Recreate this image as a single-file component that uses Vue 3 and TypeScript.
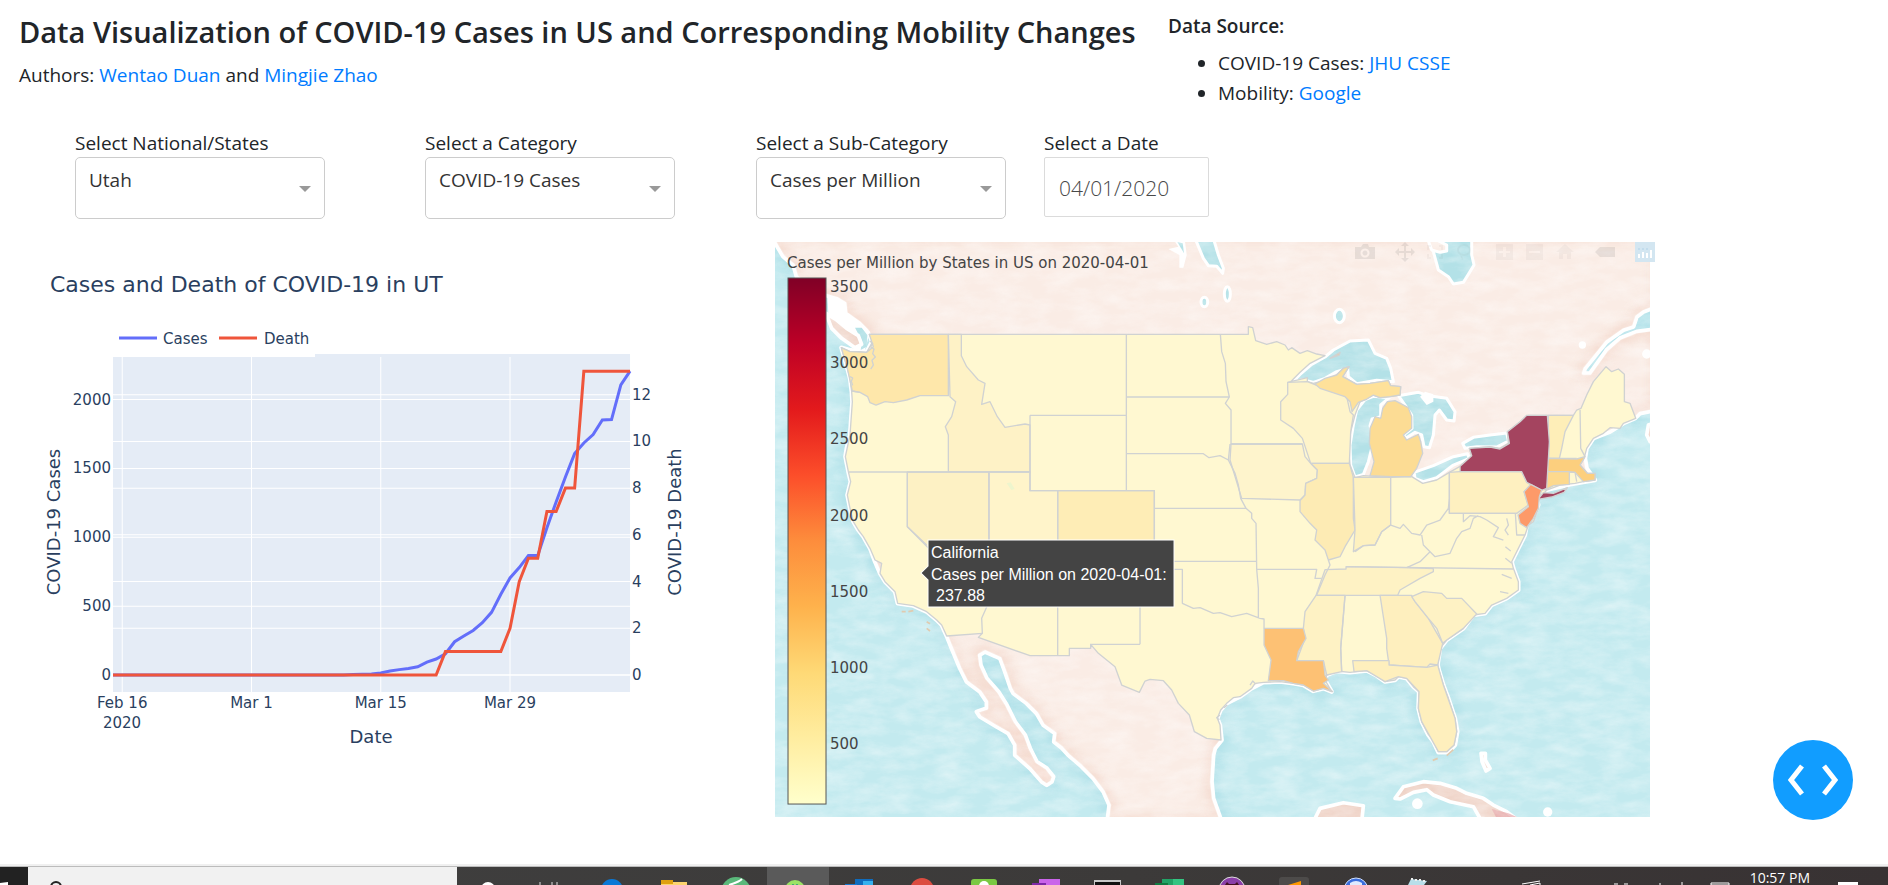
<script setup lang="ts">
interface Choice {
  id: string
  label: string
  value: string
}

const choices: Choice[] = [
  { id: 'region', label: 'Select National/States', value: 'Utah' },
  { id: 'category', label: 'Select a Category', value: 'COVID-19 Cases' },
  { id: 'subcategory', label: 'Select a Sub-Category', value: 'Cases per Million' },
]

/* ---- line chart ---- */
const plot = { left: 113, right: 630, top: 354, bottom: 692, zero: 675 }
const lastDay = 56
const dayX = (d: number) => plot.left + ((plot.right - plot.left) * d) / lastDay
const casesY = (v: number) => plot.zero - v * 0.1377
const deathY = (v: number) => plot.zero - v * 23.36

const cases: number[] = [
  ...Array<number>(25).fill(0), 1, 3, 5, 7, 15, 29, 39, 48, 60, 94, 116, 155, 242, 283, 324, 380,
  455, 586, 705, 780, 867, 867, 1070, 1257, 1438, 1608, 1685, 1746, 1852, 1855, 2107, 2206,
]
const deaths: number[] = [
  ...Array<number>(36).fill(0), 1, 1, 1, 1, 1, 1, 1, 2, 4, 5, 5, 7, 7, 8, 8, 13, 13, 13, 13, 13, 13,
]
const line = (values: number[], y: (v: number) => number) =>
  values.map((v, d) => `${dayX(d).toFixed(1)},${y(v).toFixed(1)}`).join(' ')

const caseTicks = [0, 500, 1000, 1500, 2000]
const deathTicks = [0, 2, 4, 6, 8, 10, 12]
const dateTicks = [
  { day: 1, text: 'Feb 16' },
  { day: 15, text: 'Mar 1' },
  { day: 29, text: 'Mar 15' },
  { day: 43, text: 'Mar 29' },
]

/* ---- map ---- */
const scaleTicks = [3500, 3000, 2500, 2000, 1500, 1000, 500]
const scaleY = (v: number) => 744 - (v - 500) * 0.15233

const land =
  'M15 21L18 28L40 65L70 90L80 125L110 150L165 180L200 190L225 205L228 235L270 265L290 285L298 298L306 320L290 350L268 350L240 345L214 338L232 400L240 430L245 470L247 500L240 600L230 640L226 665L235 710L242 740L232 780L240 820L250 860L265 885L280 905L300 940L315 980L330 1015L345 1040L375 1070L383 1105L430 1112L470 1130L500 1155L515 1170L530 1203L545 1240L570 1300L590 1340L630 1370L650 1400L650 1420L620 1430L630 1445L680 1475L715 1495L735 1530L735 1560L780 1600L815 1640L830 1650L845 1640L850 1625L830 1600L800 1580L780 1540L765 1500L735 1460L710 1410L685 1370L650 1330L632 1290L628 1260L645 1250L690 1270L705 1310L722 1360L730 1375L770 1405L800 1435L820 1470L855 1495L852 1520L875 1538L895 1560L930 1590L970 1630L1000 1670L1018 1710L1012 1760L1355 1760L1330 1690L1325 1640L1330 1560L1335 1540L1355 1515L1350 1470L1342 1450L1352 1425L1370 1405L1410 1385L1445 1360L1480 1342L1530 1340L1570 1345L1600 1350L1630 1368L1660 1360L1685 1370L1665 1335L1670 1320L1700 1308L1740 1312L1790 1307L1820 1322L1845 1340L1875 1335L1885 1325L1910 1330L1930 1355L1947 1370L1945 1420L1955 1460L1975 1500L1990 1520L2005 1552L2035 1552L2055 1530L2062 1490L2055 1450L2035 1390L2020 1350L2008 1310L2003 1290L2010 1240L2030 1215L2080 1180L2110 1140L2145 1135L2165 1110L2210 1090L2245 1065L2245 1040L2230 1000L2225 980L2245 940L2265 900L2270 870L2290 845L2305 810L2300 790L2330 765L2400 748L2475 735L2450 700L2445 670L2450 640L2470 610L2520 590L2560 565L2595 550L2610 535L2660 525L2660 282L2600 290L2550 310L2510 345L2460 415L2440 415L2445 400L2510 320L2560 285L2590 275L2600 245L2620 230L2660 215L2660 0L15 0Z'

const islands = [
  'M168 235L185 280L215 310L255 338L275 328L265 302L230 280L200 255Z',
  'M1875 1690L1900 1655L1960 1640L2010 1645L2060 1660L2090 1675L2140 1690L2170 1710L2210 1730L2250 1760L2130 1750L2110 1715L2040 1700L1990 1680L1970 1664L1930 1672L1890 1692Z',
  'M1630 1760L1650 1720L1720 1703L1780 1712L1775 1760Z',
  'M2660 560L2635 570L2630 600L2640 620L2660 625Z',
  'M2133 1555L2146 1555L2146 1575L2160 1600L2148 1608L2136 1580Z',
]

const lakes = [
  'M1568 440L1590 418L1625 388L1665 366L1690 345L1740 318L1795 315L1815 355L1850 370L1862 400L1870 440L1820 436L1760 446L1735 425L1733 400L1700 410L1665 430L1630 442L1600 434Z',
  'M1858 488L1832 510L1832 545L1806 552L1800 572L1810 620L1795 680L1780 718L1755 726L1742 690L1740 630L1750 570L1760 525L1785 494L1810 484Z',
  'M1885 482L1945 472L1975 482L2030 490L2055 530L2052 558L2030 555L2008 525L1995 540L1990 600L1978 638L1962 635L1955 600L1935 592L1903 612L1903 598L1926 580L1925 540L1905 510Z',
  'M1932 712L1990 692L2050 665L2092 656L2098 670L2050 690L2000 728L1960 740L1935 730Z',
  'M2078 625L2110 607L2160 600L2210 594L2215 618L2180 636L2120 635L2085 640Z',
  'M1980 0L1990 50L2005 105L2035 125L2050 147L2080 142L2100 110L2112 90L2105 60L2105 0Z',
  'M1275 10L1300 70L1315 92L1340 94L1358 115L1360 100L1345 60L1330 10Z',
]

const usa =
  'M298 298L1435 298L1435 275L1448 278L1457 317L1490 328L1520 320L1545 330L1555 345L1565 338L1590 355L1612 347L1640 357L1665 362L1620 385L1590 412L1562 440L1612 428L1612 440L1630 445L1690 430L1720 400L1737 395L1718 425L1760 448L1800 445L1855 437L1862 452L1892 455L1890 480L1860 485L1830 488L1810 480L1790 492L1770 500L1755 540L1742 590L1735 640L1740 690L1755 728L1780 722L1862 727L1925 725L1958 745L2000 735L2038 712L2070 694L2105 662L2098 640L2160 635L2190 640L2215 625L2212 590L2250 560L2275 541L2410 541L2420 525L2433 520L2450 480L2470 440L2508 395L2525 410L2545 402L2563 418L2563 500L2580 505L2597 550L2560 565L2550 580L2520 578L2500 595L2470 610L2450 640L2442 670L2430 690L2452 715L2475 715L2475 735L2440 740L2415 745L2370 750L2330 765L2305 795L2305 820L2290 860L2275 870L2265 900L2245 940L2225 980L2230 1000L2245 1040L2245 1065L2210 1090L2165 1110L2145 1135L2110 1140L2080 1180L2030 1215L2010 1240L2003 1290L2008 1310L2020 1350L2035 1390L2055 1450L2060 1490L2052 1530L2030 1550L2005 1550L1990 1515L1975 1498L1955 1460L1945 1420L1947 1370L1930 1355L1910 1330L1885 1325L1875 1335L1845 1340L1820 1322L1790 1307L1740 1312L1700 1308L1670 1320L1665 1335L1685 1370L1660 1360L1630 1368L1600 1350L1570 1345L1530 1340L1480 1342L1455 1345L1445 1360L1410 1385L1390 1388L1370 1405L1352 1425L1342 1450L1350 1470L1353 1515L1310 1510L1273 1490L1258 1440L1225 1405L1205 1365L1180 1337L1140 1333L1125 1338L1108 1372L1055 1350L1035 1295L985 1255L962 1228L962 1240L898 1240L898 1262L780 1262L625 1207L637 1195L530 1203L515 1170L500 1155L470 1130L430 1112L383 1105L375 1070L345 1040L330 1015L335 985L315 975L300 940L280 905L265 885L250 860L240 820L232 780L242 740L235 710L226 665L240 600L247 500L245 470L240 430L232 400L214 338L240 350L268 350L290 352L308 320Z'

interface Shade {
  fill: string
  d: string
}

const shaded: Shade[] = [
  { fill: '#fee7aa', d: 'M298 298L535 298L535 482L450 482L410 495L370 503L345 500L318 510L300 503L293 485L270 472L247 468L232 400L214 338L240 350L290 352L310 335Z' },
  { fill: '#fef2c6', d: 'M535 298L574 298L574 362L590 395L625 435L645 445L635 508L660 500L682 545L705 577L765 567L780 570L780 711L535 711L535 600L526 575L545 545L557 500L540 485Z' },
  { fill: '#fdf1c4', d: 'M412 711L657 711L657 1100L635 1100L412 875Z' },
  { fill: '#fff4ca', d: 'M657 711L780 711L780 767L863 767L863 979L657 979Z' },
  { fill: '#feedb6', d: 'M863 767L1153 767L1153 979L863 979Z' },
  { fill: '#fef4cc', d: 'M1383 627L1597 627L1605 665L1622 685L1642 705L1640 730L1607 745L1605 780L1590 795L1415 790L1380 675Z' },
  { fill: '#fef4ca', d: 'M1553 442L1612 440L1650 455L1730 485L1740 530L1750 540L1742 590L1738 685L1622 685L1597 610L1570 580L1532 555L1532 500L1553 478Z' },
  { fill: '#fdebb4', d: 'M1622 685L1738 685L1750 727L1750 850L1755 885L1725 935L1710 965L1675 975L1665 945L1635 915L1640 885L1620 865L1590 830L1590 797L1605 780L1607 745L1640 730L1642 705Z' },
  { fill: '#fef1c0', d: 'M1750 727L1862 727L1862 870L1835 890L1815 930L1780 932L1750 950L1755 885Z' },
  { fill: '#fef2c4', d: 'M1665 1004L1728 1002L1728 995L1910 998L1990 1001L1990 1010L1950 1030L1890 1065L1883 1081L1638 1081Z' },
  { fill: '#fef2c4', d: 'M1638 1081L1725 1081L1712 1240L1715 1310L1670 1320L1660 1277L1580 1277L1605 1210L1600 1180L1605 1130Z' },
  { fill: '#feefbe', d: 'M1830 1081L1925 1081L1935 1100L1975 1150L2018 1225L2003 1290L1980 1287L1970 1297L1857 1290L1850 1240L1850 1210Z' },
  { fill: '#feefbd', d: 'M1748 1277L1857 1277L1857 1290L1970 1297L2003 1290L2020 1350L2055 1450L2060 1490L2052 1530L2030 1550L2005 1550L1955 1460L1945 1420L1947 1370L1910 1330L1885 1325L1845 1340L1790 1307L1752 1310Z' },
  { fill: '#fef2c4', d: 'M1925 1085L1960 1070L2015 1075L2030 1090L2075 1090L2120 1137L2080 1180L2030 1215L2018 1225L2000 1180L1975 1150L1935 1100Z' },
  { fill: '#fef0c0', d: 'M2038 712L2070 710L2255 710L2270 740L2282 750L2262 770L2275 810L2240 835L2038 835Z' },
  { fill: '#fee19a', d: 'M1635 447L1665 430L1700 420L1720 400L1737 395L1718 425L1760 448L1800 445L1855 437L1862 452L1892 455L1890 480L1860 485L1830 488L1810 480L1790 492L1765 502L1746 530L1740 500L1725 485L1650 460Z' },
  { fill: '#fcdc94', d: 'M1852 500L1875 497L1915 518L1925 545L1925 580L1900 600L1910 615L1945 598L1952 620L1958 655L1940 700L1922 725L1862 725L1800 722L1812 680L1798 625L1800 580L1815 545L1832 550L1838 520Z' },
  { fill: '#feeeb8', d: 'M2335 541L2410 541L2385 590L2375 640L2368 670L2335 670Z' },
  { fill: '#fccf7e', d: 'M2332 670L2420 672L2445 665L2430 690L2452 715L2475 715L2475 735L2440 740L2415 712L2330 710Z' },
  { fill: '#fdd98e', d: 'M2330 710L2398 710L2398 748L2350 752L2325 765Z' },
  { fill: '#fdc174', d: 'M1482 1180L1600 1180L1608 1210L1585 1250L1580 1277L1660 1277L1665 1320L1675 1335L1660 1345L1688 1370L1660 1360L1630 1368L1600 1350L1570 1345L1540 1337L1495 1337L1503 1275L1482 1230Z' },
  { fill: '#a4445f', d: 'M2070 710L2070 694L2105 662L2098 640L2160 636L2190 642L2218 625L2212 590L2250 560L2270 541L2332 541L2338 620L2330 760L2315 766L2270 742L2255 710Z' },
  { fill: '#a4445f', d: 'M2304 793L2320 773L2350 775L2392 758L2382 772L2345 786Z' },
  { fill: '#fd9a69', d: 'M2282 748L2315 765L2308 785L2305 820L2290 850L2270 878L2250 865L2244 840L2275 815L2262 770Z' },
]

const borders =
  'M412 711V875L470 930M657 711V1100L635 1150L637 1195M235 711H780M245 468L270 472M780 541H1069M780 541V767H1153V979H1458M1069 298V767M863 767V1262M1110 1228V1003H1237V1105L1270 1120L1290 1118L1330 1135L1350 1133L1385 1145L1430 1135L1470 1150L1482 1152V1180M962 1228H1110M1069 486H1378M1069 656H1300L1317 668L1350 662L1375 675M1153 820H1428M1351 298L1355 350L1366 385L1368 440L1378 486L1366 505L1383 525V627H1597M1553 442L1562 440M1380 627L1375 675L1395 715L1405 750L1412 790L1428 820L1445 835L1445 850L1458 865L1460 1003H1640L1635 1030H1655M1675 975L1680 990L1665 1020L1640 1080M1460 1003L1465 1060V1150M1153 979V820M1728 995L2230 1002M2038 712V835H2240M1755 950L1780 932L1815 930L1835 890L1862 870L1890 880L1900 868L1925 895L1950 900L1970 870L2010 855L2035 820L2038 790M1910 998L1950 980L1980 950M1955 900L1960 930L1995 965L2040 955L2060 910L2075 890L2100 880L2110 850L2125 842M2080 835V860L2100 842L2130 845L2150 855L2185 878L2170 905L2200 915M2236 835L2240 900H2265M2430 525L2432 640L2445 665M2335 670H2420M2398 710L2415 712L2420 740M1725 1081L1712 1240L1715 1310M2206 935L2222 948M2206 970L2225 985M2195 1018L2225 1030M2190 1070L2215 1075M2210 850L2215 870L2205 885L2215 900'
</script>

<template>
  <div class="page">
    <header class="head">
      <div class="intro">
        <h1>Data Visualization of COVID-19 Cases in US and Corresponding Mobility Changes</h1>
        <p>Authors: <a href="#">Wentao Duan</a> and <a href="#">Mingjie Zhao</a></p>
      </div>
      <section class="sources">
        <h2>Data Source:</h2>
        <ul>
          <li>COVID-19 Cases: <a href="#">JHU CSSE</a></li>
          <li>Mobility: <a href="#">Google</a></li>
        </ul>
      </section>
    </header>

    <form class="controls" @submit.prevent>
      <div v-for="c in choices" :key="c.id" class="field">
        <label :for="c.id">{{ c.label }}</label>
        <div class="picker">
          <select :id="c.id">
            <option>{{ c.value }}</option>
          </select>
        </div>
      </div>
      <div class="field">
        <label for="date">Select a Date</label>
        <input id="date" class="date" type="text" value="04/01/2020" />
      </div>
    </form>

    <main class="charts">
      <svg class="chart" viewBox="30 242 745 575" role="img" aria-label="Cases and Death of COVID-19 in UT">
        <text class="title" x="50" y="292">Cases and Death of COVID-19 in UT</text>
        <rect class="area" :x="plot.left" :y="plot.top" :width="plot.right - plot.left" :height="plot.bottom - plot.top" />
        <rect x="113" y="353" width="202" height="4" fill="#fff" />
        <g class="grid">
          <line v-for="t in dateTicks" :key="t.text" :x1="dayX(t.day)" :x2="dayX(t.day)" y1="357" :y2="plot.bottom" />
          <line v-for="v in caseTicks" :key="`c${v}`" :x1="plot.left" :x2="plot.right" :y1="casesY(v)" :y2="casesY(v)" />
          <line v-for="v in deathTicks" :key="`d${v}`" :x1="plot.left" :x2="plot.right" :y1="deathY(v)" :y2="deathY(v)" />
        </g>
        <polyline class="series blue" :points="line(cases, casesY)" />
        <polyline class="series red" :points="line(deaths, deathY)" />
        <line class="series blue" x1="119" x2="157" y1="338" y2="338" />
        <line class="series red" x1="219" x2="257" y1="338" y2="338" />
        <text x="163" y="344">Cases</text>
        <text x="264" y="344">Death</text>
        <text v-for="v in caseTicks" :key="v" x="111" :y="casesY(v) + 5" text-anchor="end">{{ v }}</text>
        <text v-for="v in deathTicks" :key="v" x="632" :y="deathY(v) + 5">{{ v }}</text>
        <text v-for="t in dateTicks" :key="t.text" :x="dayX(t.day)" y="708" text-anchor="middle">{{ t.text }}</text>
        <text x="122" y="728" text-anchor="middle">2020</text>
        <text class="axis" x="371" y="743" text-anchor="middle">Date</text>
        <text class="axis" transform="translate(60 522) rotate(-90)" text-anchor="middle">COVID-19 Cases</text>
        <text class="axis" transform="translate(681 522) rotate(-90)" text-anchor="middle">COVID-19 Death</text>
      </svg>

      <div class="map">
        <svg viewBox="775 242 875 575" role="img" aria-label="Cases per Million by States in US">
          <defs>
            <clipPath id="frame"><rect x="15" y="21" width="2625" height="1725" /></clipPath>
            <clipPath id="landclip"><path :d="land" /></clipPath>
            <filter id="soft" x="-10%" y="-10%" width="120%" height="120%"><feGaussianBlur stdDeviation="14" /></filter>
            <filter id="paper" x="0" y="0" width="100%" height="100%">
              <feTurbulence type="fractalNoise" baseFrequency="0.012 0.03" numOctaves="5" seed="4" />
              <feColorMatrix values="0 0 0 0 1  0 0 0 0 1  0 0 0 0 1  1.4 0 0 0 -0.45" />
            </filter>
            <linearGradient id="ramp" x1="0" y1="1" x2="0" y2="0">
              <stop offset="0" stop-color="#ffffcc" />
              <stop offset=".125" stop-color="#ffeda0" />
              <stop offset=".25" stop-color="#fed976" />
              <stop offset=".375" stop-color="#feb24c" />
              <stop offset=".5" stop-color="#fd8d3c" />
              <stop offset=".625" stop-color="#fc4e2a" />
              <stop offset=".75" stop-color="#e31a1c" />
              <stop offset=".875" stop-color="#bd0026" />
              <stop offset="1" stop-color="#800026" />
            </linearGradient>
          </defs>

          <g transform="translate(770 235) scale(.33333)">
            <g clip-path="url(#frame)" stroke-linejoin="round">
              <rect x="15" y="21" width="2625" height="1725" fill="#c3eaef" />
              <path :d="land" fill="none" stroke="#a9dde6" stroke-width="46" filter="url(#soft)" opacity=".6" />
              <path :d="land" fill="#faece5" stroke="#fff" stroke-width="13" />
              <g clip-path="url(#landclip)">
                <path :d="land" fill="none" stroke="#f3d6c9" stroke-width="40" filter="url(#soft)" opacity=".7" />
              </g>
              <path :d="land" fill="none" stroke="#fff" stroke-width="9" />
              <path d="M172 185L205 188L228 210L232 240L300 290L285 345L262 350L225 300L175 235Z" fill="#fff" />
              <path d="M255 278L275 278L292 300L290 335L272 345L276 318Z" fill="#b5e2e7" />
              <path v-for="d in islands" :key="d" :d="d" fill="#efd3c7" stroke="#fff" stroke-width="11" />
              <path v-for="d in lakes" :key="d" :d="d" fill="#b3e1e7" stroke="#fff" stroke-width="9" />
              <path d="M1195 42L1225 35L1215 20H1245L1250 60L1240 98L1228 98L1228 60Z" fill="#fff" />
              <path d="M1222 21L1242 55L1238 25Z" fill="#b5e2e7" />
              <path d="M1972 10L2000 15L2030 30L2030 48L2010 52L1985 45Z" fill="#fbeee7" stroke="#fff" stroke-width="9" />
              <path d="M1950 485L1965 470L1990 478L1990 500L1970 510Z" fill="#fff" />
              <path d="M2165 1722L2215 1735L2250 1750H2180Z" fill="#e5a0a4" opacity=".7" />
              <g fill="#b5e2e7" stroke="#fff" stroke-width="9">
                <ellipse cx="1303" cy="201" rx="10" ry="14" />
                <ellipse cx="1372" cy="177" rx="9" ry="22" />
                <ellipse cx="1708" cy="243" rx="15" ry="20" />
              </g>
              <g fill="#fff">
                <circle cx="2437" cy="330" r="11" />
                <circle cx="2630" cy="357" r="14" />
                <circle cx="1942" cy="1706" r="16" />
                <circle cx="2333" cy="1731" r="14" />
              </g>
              <rect x="15" y="21" width="2625" height="1725" filter="url(#paper)" opacity=".5" />

              <path :d="usa" fill="#fff8d1" class="edge" />
              <path v-for="s in shaded" :key="s.d" :d="s.d" :fill="s.fill" class="edge" />
              <path :d="borders" fill="none" class="edge" />
              <path d="M300 318l8 8-6 10 10 6-4 14 8 10-10 10 4 14-8 12M240 425l8 4-4 10 4 12M1350 1440l-10 8 8 6M1362 1418l10-8M1440 1350l8-12 6 6" fill="none" class="edge" />
              <path d="M710 745L722 742L734 762L724 765Z" fill="#eef5cd" />
              <path d="M395 1130h12M415 1130l15-3M470 1160l10 6M470 1180l10 8M1988 1576l15-6M2030 1562l20-18" fill="none" stroke="#e0cbb0" stroke-width="5" />
              <path d="M1680 370L1710 352L1708 360Z" fill="#f0cf96" class="edge" />
            </g>
          </g>

          <rect class="ramp" x="788" y="278" width="38" height="526" fill="url(#ramp)" />
          <text class="legend" x="787" y="268">Cases per Million by States in US on 2020-04-01</text>
          <text v-for="v in scaleTicks" :key="v" class="legend" x="830" :y="scaleY(v) + 5">{{ v }}</text>

          <path class="tip" d="M928 540H1174V607H928V580L921 573L928 566Z" />
          <g class="tiptext">
            <text x="931" y="558">California</text>
            <text x="931" y="580">Cases per Million on 2020-04-01:</text>
            <text x="936" y="601">237.88</text>
          </g>
        </svg>

        <div class="modebar">
          <div>
            <button type="button" aria-label="Download plot"><svg viewBox="0 0 20 20"><path fill-rule="evenodd" d="M0 5h6l2-3h5l1 3h6v12H0zM10 6.500a4.500 4.500 0 1 0 .01 0zM10 8.500a2.500 2.500 0 1 1-.01 0z" /></svg></button>
          </div>
          <div>
            <button type="button" aria-label="Pan"><svg viewBox="0 0 20 20"><path d="M10 0l4 4h-3v5h5V6l4 4-4 4v-3h-5v5h3l-4 4-4-4h3v-5H4v3l-4-4 4-4v3h5V4H6z" /></svg></button>
            <button class="faint" type="button" aria-label="Box select"><svg viewBox="0 0 20 20"><path d="M2 3h4v2H4v3H2zM14 3h4v5h-2V5h-2zM2 12h2v3h2v2H2zM16 12h2v5h-4v-2h2z" /></svg></button>
            <button class="faint" type="button" aria-label="Lasso select"><svg viewBox="0 0 20 20"><path fill-rule="evenodd" d="M9 2a7 6 0 1 0 .01 0zM9 4a5 4 0 1 1-.01 0zM5 13l2 5 1-1-1-4z" /></svg></button>
          </div>
          <div>
            <button class="faint" type="button" aria-label="Zoom in"><svg viewBox="0 0 20 20"><path fill-rule="evenodd" d="M1 2h17v16H1zM8 5v4H4v2h4v4h3v-4h4V9h-4V5z" /></svg></button>
            <button class="faint" type="button" aria-label="Zoom out"><svg viewBox="0 0 20 20"><path fill-rule="evenodd" d="M1 2h17v16H1zM4 9v2h11V9z" /></svg></button>
            <button class="faint" type="button" aria-label="Reset"><svg viewBox="0 0 20 20"><path d="M10 2l9 8h-3v7h-4v-5H8v5H4v-7H1z" /></svg></button>
          </div>
          <div>
            <button type="button" aria-label="Toggle hover"><svg viewBox="0 0 20 20"><path d="M0 10l5-5h15v10H5z" /></svg></button>
          </div>
          <div>
            <a class="brand" href="#" aria-label="Plotly"><svg viewBox="0 0 20 20"><path d="M3 12h2v4H3zM7 10h2v6H7zM11 11h2v5h-2zM15 8h2v8h-2z" fill="#fff" /><path d="M3 6h2v2H3zM7 6h2v2H7zM11 6h2v2h-2z" fill="#c2dcec" /></svg></a>
          </div>
        </div>
      </div>
    </main>

    <button class="debug" type="button" aria-label="Open dev tools">
      <svg viewBox="0 0 80 80"><path d="M29 26L18 40L29 54M51 26L62 40L51 54" /></svg>
    </button>

    <footer class="taskbar">
      <button class="start" type="button" aria-label="Start"><svg viewBox="0 0 28 18"><path d="M0 16l8-1v3H0z" fill="#fff" /></svg></button>
      <label class="search">
        <svg viewBox="0 0 20 18"><circle cx="10" cy="20" r="5" fill="none" stroke="#222" stroke-width="2" /></svg>
        <input type="search" aria-label="Search" />
      </label>
      <nav class="apps">
        <button type="button" aria-label="Cortana"><svg viewBox="0 0 30 18"><circle cx="15" cy="22" r="7" fill="#fff" /></svg></button>
        <button type="button" aria-label="Task View"><svg viewBox="0 0 30 18"><path d="M5 15v3M17 15v3M22 15v3" stroke="#ddd" stroke-width="1" /></svg></button>
        <button type="button" aria-label="Edge"><svg viewBox="0 0 30 18"><circle cx="15" cy="23" r="11" fill="#0a78d6" /></svg></button>
        <button type="button" aria-label="Explorer"><svg viewBox="0 0 30 18"><path d="M2 13h12v5H2z" fill="#dfa010" /><path d="M14 15h14v3H2v-1h12z" fill="#fcd46e" /></svg></button>
        <button type="button" aria-label="Atom"><svg viewBox="0 0 30 18"><circle cx="15" cy="25" r="15" fill="#5ab87a" /><path d="M8 18Q18 15 21 12" fill="none" stroke="#fff" stroke-width="2" /></svg></button>
        <button class="active" type="button" aria-label="Android"><svg viewBox="0 0 30 18"><circle cx="12" cy="23" r="10" fill="#9be365" /><path d="M9 17h2v1H9zM13 17h2v1h-2z" fill="#4a7" /></svg></button>
        <button type="button" aria-label="Outlook"><svg viewBox="0 0 30 18"><path d="M10 12h18v6H10z" fill="#0f6cbd" /><path d="M18 14h10v4H18z" fill="#35b1ee" /><path d="M0 17h12v1H0z" fill="#1779d0" /></svg></button>
        <button type="button" aria-label="Chrome"><svg viewBox="0 0 30 18"><circle cx="15" cy="23" r="12" fill="#dc4c40" /></svg></button>
        <button type="button" aria-label="Camtasia"><svg viewBox="0 0 30 18"><rect x="2" y="12" width="26" height="12" rx="3" fill="#7ac943" /><circle cx="15" cy="19" r="5" fill="#fff" /></svg></button>
        <button type="button" aria-label="Notes"><svg viewBox="0 0 30 18"><path d="M8 12h21v6H8z" fill="#ca64ea" /><path d="M1 16h14v2H1z" fill="#7d28a8" /></svg></button>
        <button type="button" aria-label="Terminal"><svg viewBox="0 0 30 18"><path d="M1 13h27v5H1z" fill="#c8c8c8" /><path d="M2 15h25v3H2z" fill="#111" /></svg></button>
        <button type="button" aria-label="Excel"><svg viewBox="0 0 30 18"><path d="M7 12h22v6H7z" fill="#21a366" /><path d="M18 12h11v6H18z" fill="#33c481" /><path d="M0 16h13v2H0z" fill="#107c41" /></svg></button>
        <button type="button" aria-label="GitHub"><svg viewBox="0 0 30 18"><circle cx="15" cy="23" r="13" fill="#8b3fa8" stroke="#ddd" /><path d="M8 18l2-3 2 2h6l2-2 2 3" fill="#412" /></svg></button>
        <button type="button" aria-label="Sublime"><svg viewBox="0 0 30 18"><rect y="10" width="30" height="20" rx="3" fill="#4d4b4a" /><path d="M9 18l13-4v4z" fill="#ff9800" /></svg></button>
        <button type="button" aria-label="Browser"><svg viewBox="0 0 30 18"><circle cx="15" cy="23" r="12" fill="#3a6ddc" stroke="#cfe0ff" stroke-width="1" /><path d="M9 16q6-4 12 0v2H9z" fill="#dfeaff" /></svg></button>
        <button type="button" aria-label="Notepad"><svg viewBox="0 0 30 18"><path d="M8 12l16 2-3 4H5z" fill="#b9dfea" /><path d="M8 11h2v2H8zM12 12h2v2h-2zM16 12h2v2h-2zM20 13h2v2h-2z" fill="#eee" /></svg></button>
      </nav>
      <div class="tray">
        <svg viewBox="0 0 220 18"><path d="M2 17L20 14M10 18l10-2v2M94 17h4M104 17h4M140 16v2M162 15v3M191 16h18v2h-18z" fill="none" stroke="#fff" stroke-width="1" /></svg>
        <time>10:57 PM</time>
        <svg class="note" viewBox="0 0 30 18"><path d="M2 15h20v3H2z" fill="#fff" /></svg>
      </div>
    </footer>
  </div>
</template>

<style>
body {
  margin: 0;
  background: #fff;
}
</style>

<style scoped>
* {
  box-sizing: border-box;
}
.page {
  display: flex;
  flex-direction: column;
  min-height: 100vh;
  overflow: hidden;
  font-family: 'Segoe UI', 'Open Sans', 'Noto Sans', sans-serif;
  font-size: 19px;
  line-height: 30px;
  color: #212529;
}
a {
  color: #007bff;
  text-decoration: none;
}
.head {
  display: grid;
  grid-template-columns: 1149fr 720fr;
  padding: 11px 0 0 19px;
  height: 129px;
}
.intro {
  min-width: 0;
}
h1 {
  margin: 3px 0 10px;
  font-size: 29px;
  font-weight: 600;
  line-height: 36px;
  white-space: nowrap;
}
p {
  margin: 0;
}
h2 {
  margin: 0 0 7px;
  font-size: 19px;
  font-weight: 600;
  line-height: 30px;
}
ul {
  margin: 0;
  padding-left: 50px;
}
.controls {
  display: grid;
  grid-template-columns: 350fr 331fr 288fr 844fr;
  padding-left: 75px;
  height: 113px;
}
.field {
  display: flex;
  flex-direction: column;
  align-items: flex-start;
}
.field label {
  line-height: 28px;
}
.picker {
  position: relative;
  width: 250px;
}
.picker::after {
  content: '';
  position: absolute;
  right: 14px;
  top: 29px;
  border: 6px solid transparent;
  border-top-color: #999;
  border-bottom: 0;
}
select {
  appearance: none;
  display: block;
  width: 100%;
  height: 62px;
  padding: 0 36px 16px 13px;
  border: 1px solid #ccc;
  border-radius: 5px;
  background: #fff;
  color: #333;
  font: inherit;
}
.date {
  width: 165px;
  height: 60px;
  padding: 2px 14px 0;
  border: 1px solid #dbdbdb;
  border-radius: 2px;
  color: #484848;
  font-family: inherit;
  font-size: 21px;
  font-weight: 300;
}
.charts {
  display: grid;
  grid-template-columns: 745fr 875fr;
  padding: 0 12.600% 0 30px;
}
.chart,
.map > svg {
  display: block;
  width: 100%;
}
.chart {
  font-family: Verdana, 'DejaVu Sans', sans-serif;
  font-size: 15px;
  fill: #2a3f5f;
}
.title {
  font-size: 22px;
}
.axis {
  font-size: 18px;
}
.area {
  fill: #e5ecf6;
}
.grid line {
  stroke: #fff;
  stroke-width: 1;
}
.series {
  fill: none;
  stroke-width: 3;
}
.series.blue {
  stroke: #636efa;
}
.series.red {
  stroke: #ef553b;
}
.map {
  position: relative;
}
.edge {
  stroke: #d0d2d2;
  stroke-width: 4;
}
.ramp {
  stroke: #555;
}
.legend {
  font-family: Verdana, 'DejaVu Sans', sans-serif;
  font-size: 15px;
  fill: #444;
}
.tip {
  fill: #444;
  stroke: #fff;
}
.tiptext {
  font-family: Arial, 'Liberation Sans', sans-serif;
  font-size: 16px;
  fill: #fff;
}
.modebar {
  position: absolute;
  top: 0;
  right: -5px;
  display: flex;
  gap: 20px;
}
.modebar div {
  display: flex;
  gap: 10px;
}
.modebar button,
.brand {
  width: 20px;
  height: 20px;
  padding: 0;
  border: 0;
  background: none;
  line-height: 0;
}
.modebar button svg {
  fill: #444;
  opacity: 0.1;
}
.modebar .faint svg {
  opacity: 0.04;
}
.modebar .brand {
  background: #d3e6f1;
}
.debug {
  position: fixed;
  right: 35px;
  bottom: 65px;
  width: 80px;
  height: 80px;
  padding: 0;
  border: 0;
  border-radius: 50%;
  background: #119dff;
}
.debug path {
  fill: none;
  stroke: #fff;
  stroke-width: 5;
}
.taskbar {
  display: flex;
  height: 21px;
  margin-top: auto;
  border-top: 2px solid #f0f0f0;
  box-shadow: inset 0 1px #bcbcbc;
  padding-top: 1px;
  overflow: hidden;
  background: linear-gradient(90deg, #404040, #3c3a39 60%, #383233);
  background-clip: content-box;
}
.taskbar button {
  display: flex;
  justify-content: center;
  padding: 0;
  border: 0;
  background: none;
}
.taskbar svg {
  height: 18px;
}
.taskbar .start {
  width: 28px;
  background: #222;
}
.search {
  width: 429px;
  padding-left: 18px;
  background: #f1f1f1;
  display: flex;
}
.search svg {
  width: 20px;
}
.search input {
  flex: 1;
  min-width: 0;
  border: 0;
  background: none;
}
.apps {
  display: flex;
}
.taskbar .apps button {
  width: 62px;
}
.apps svg {
  width: 30px;
}
.taskbar .apps .active {
  background: #5a5a5a;
}
.tray {
  display: flex;
  align-items: flex-end;
  margin-left: auto;
  color: #fff;
  font-size: 14px;
  line-height: 14px;
}
.tray svg {
  width: 220px;
  margin-right: 10px;
}
.tray time {
  margin-right: 26px;
  white-space: nowrap;
}
.tray .note {
  width: 30px;
  margin-right: 22px;
}
</style>
